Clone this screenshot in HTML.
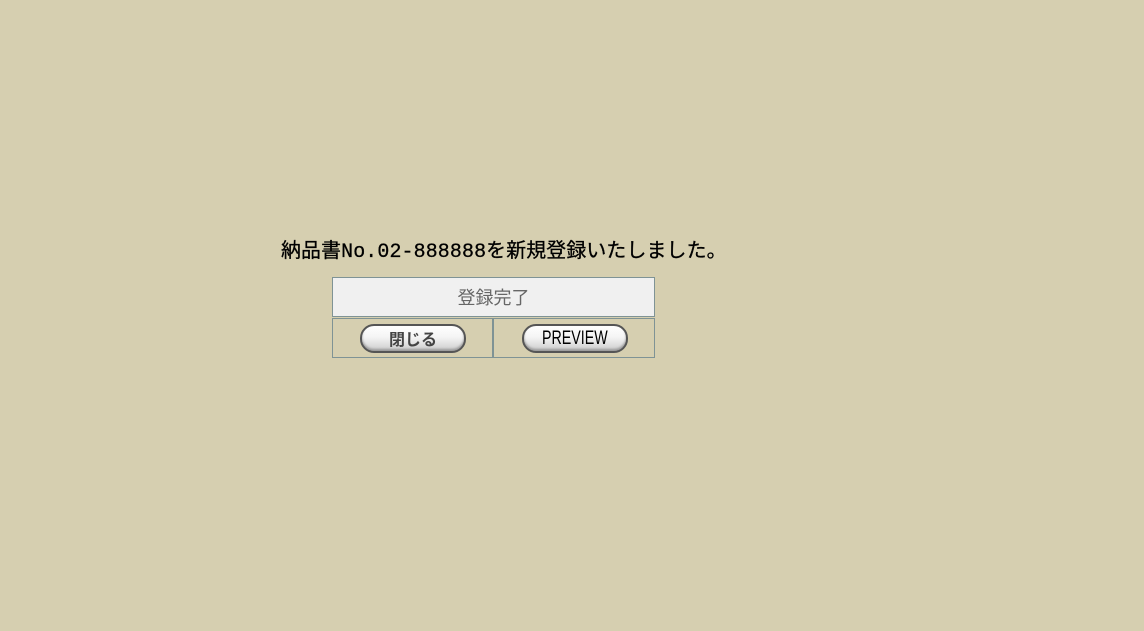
<!DOCTYPE html>
<html><head><meta charset="utf-8"><style>
body{margin:0;width:1144px;height:631px;background:#d6cfb0;position:relative;overflow:hidden;font-family:"Liberation Mono","WenQuanYi Zen Hei","Noto Sans CJK JP",monospace;}
.msg{position:absolute;left:281px;top:239px;font-size:19.9px;letter-spacing:0.15px;color:#000;white-space:nowrap;line-height:26px;-webkit-text-stroke:0.3px #000;}
.box{position:absolute;border:1px solid #7f9395;}
.top{left:332px;top:277px;width:321px;height:38px;background:#f0f0f0;font-family:"Liberation Sans","Noto Sans CJK JP",sans-serif;font-size:18px;color:#666;text-align:center;line-height:40px;}
.c1{left:332px;top:318px;width:159px;height:38px;}
.c2{left:493px;top:318px;width:160px;height:38px;}
.btn{position:absolute;width:102px;height:25px;border:2px solid #555;border-radius:14px;background:linear-gradient(#fff 0%,#f4f4f4 45%,#ccc 100%);box-shadow:inset 0 -2px 2px #999;text-align:center;line-height:25px;font-size:16px;}
.b1{left:360px;top:324px;color:#444;font-family:"Noto Sans CJK JP",sans-serif;font-weight:bold;}
.b2{left:522px;top:324px;color:#000;font-family:"Liberation Sans",sans-serif;font-size:19px;}
.b2 span{display:inline-block;transform:scaleX(0.75);}
</style></head><body>
<div class="msg">納品書No.02-888888を新規登録いたしました。</div>
<div class="box top">登録完了</div>
<div class="box c1"></div>
<div class="box c2"></div>
<div class="btn b1">閉じる</div>
<div class="btn b2"><span>PREVIEW</span></div>
</body></html>
